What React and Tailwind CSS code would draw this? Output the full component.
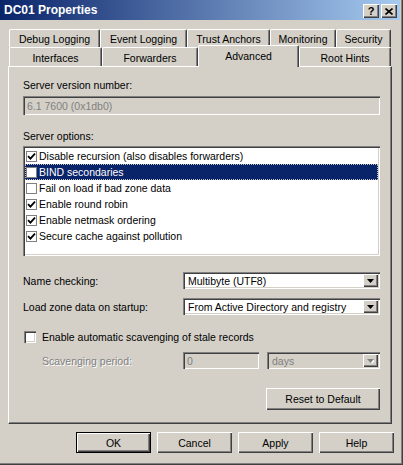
import React from "react";

const raised = "shadow-[inset_1px_1px_#ffffff,inset_-1px_-1px_#404040,inset_-2px_-2px_#808080]";
const sunken = "shadow-[inset_1px_1px_#808080,inset_2px_2px_#404040,inset_-1px_-1px_#ffffff,inset_-2px_-2px_#d4d0c8]";

function Tab({ label, w }) {
  return (
    <div
      className={`h-full flex items-center justify-center border-t border-l border-r border-t-white border-l-white border-r-[#404040] rounded-tl-[2px] rounded-tr-[2px] shadow-[inset_-1px_0_#808080] bg-[#d4d0c8] ${w}`}
    >
      <span className="leading-[12px] pt-[1px]">{label}</span>
    </div>
  );
}

function Arrow({ disabled }) {
  return (
    <div className={`w-[15px] h-[13px] bg-[#d4d0c8] ${raised} flex items-center justify-center`}>
      <svg width="7" height="4" viewBox="0 0 7 4">
        {disabled && <polygon points="1,1 8,1 4.5,5" fill="#ffffff" />}
        <polygon points="0,0 7,0 3.5,4" fill={disabled ? "#808080" : "#000000"} />
      </svg>
    </div>
  );
}

function Combo({ text, disabled, w }) {
  return (
    <div
      className={`flex h-[17px] items-center ${sunken} ${
        disabled ? "bg-[#d4d0c8] text-[#808080]" : "bg-white text-black"
      } pl-[5px] pr-[2px] ${w}`}
    >
      <span className="flex-1 truncate leading-[12px]">{text}</span>
      <Arrow disabled={disabled} />
    </div>
  );
}

function ListCheck({ checked }) {
  return (
    <div className="w-[11px] h-[11px] border border-[#808080] bg-white flex items-center justify-center shrink-0">
      {checked && (
        <svg width="9" height="9" viewBox="0 0 9 9">
          <path d="M1 4.2 L3.4 6.6 L8 1.6" stroke="#000000" strokeWidth="1.8" fill="none" />
        </svg>
      )}
    </div>
  );
}

function ListItem({ label, checked, selected }) {
  return (
    <div
      className={`flex items-center h-[16px] pl-[1px] ${
        selected ? "bg-[#0a246a] text-white outline outline-1 outline-dotted outline-[#c0c0c0] -outline-offset-1" : "text-black"
      }`}
    >
      <ListCheck checked={checked} />
      <span className="ml-[2px] leading-[12px]">{label}</span>
    </div>
  );
}

function Button({ label, def, w }) {
  return (
    <div
      className={`flex items-center justify-center bg-[#d4d0c8] ${raised} ${
        def ? "border border-black" : ""
      } ${w}`}
    >
      <span className="leading-[12px]">{label}</span>
    </div>
  );
}

export default function App() {
  return (
    <div className="w-[403px] h-[465px] bg-[#d4d0c8] overflow-hidden flex flex-col font-['Liberation_Sans',Arial,sans-serif] text-[10.5px] text-black shadow-[inset_-1px_-1px_#404040,inset_-2px_-2px_#808080]">
      {/* Title bar */}
      <div className="w-[400px] h-[20px] flex items-start bg-[linear-gradient(to_right,#0a246a,#a6caf0)] pr-[3px]">
        <span className="ml-[4px] mt-[3px] text-white font-bold text-[12px] leading-[14px]">
          DC01 Properties
        </span>
        <div className="ml-auto mt-[4px] flex gap-[2px]">
          <div className={`w-[16px] h-[14px] bg-[#d4d0c8] ${raised} flex items-center justify-center`}>
            <span className="font-bold text-[11px] leading-[11px]">?</span>
          </div>
          <div className={`w-[16px] h-[14px] bg-[#d4d0c8] ${raised} flex items-center justify-center`}>
            <svg width="8" height="7" viewBox="0 0 8 7">
              <path d="M0.5 0.5 L7.5 6.5 M7.5 0.5 L0.5 6.5" stroke="#000000" strokeWidth="1.6" />
            </svg>
          </div>
        </div>
      </div>

      {/* Tabs row 1 */}
      <div className="flex h-[18px] ml-[9px] mt-[9px]">
        <Tab label="Debug Logging" w="w-[91px]" />
        <Tab label="Event Logging" w="w-[87px]" />
        <Tab label="Trust Anchors" w="w-[83px]" />
        <Tab label="Monitoring" w="w-[66px]" />
        <Tab label="Security" w="w-[55px]" />
      </div>
      {/* Tabs row 2 */}
      <div className="flex h-[19px] ml-[9px] items-end">
        <Tab label="Interfaces" w="w-[93px]" />
        <Tab label="Forwarders" w="w-[96px]" />
        <div className="relative z-10 w-[101px] h-[22px] -mb-[1px] flex justify-center border-t border-l border-r border-t-white border-l-white border-r-[#404040] rounded-tl-[2px] rounded-tr-[2px] shadow-[inset_-1px_0_#808080] bg-[#d4d0c8]">
          <span className="leading-[12px] mt-[4px]">Advanced</span>
        </div>
        <Tab label="Root Hints" w="w-[92px]" />
      </div>

      {/* Panel */}
      <div className="ml-[8px] w-[384px] h-[358px] border-t border-l border-r border-b border-t-white border-l-white border-r-[#404040] border-b-[#404040] shadow-[inset_-1px_-1px_#808080] flex flex-col pl-[14px] pr-[11px]">
        <div className="mt-[12px] leading-[13px]">Server version number:</div>
        <div className={`mt-[4px] h-[19px] flex items-center pl-[4px] bg-[#d4d0c8] text-[#808080] ${sunken}`}>
          <span className="leading-[12px]">6.1 7600 (0x1db0)</span>
        </div>

        <div className="mt-[15px] leading-[13px]">Server options:</div>
        <div className={`mt-[3px] h-[110px] bg-white p-[2px] ${sunken}`}>
          <ListItem label="Disable recursion (also disables forwarders)" checked />
          <ListItem label="BIND secondaries" selected />
          <ListItem label="Fail on load if bad zone data" />
          <ListItem label="Enable round robin" checked />
          <ListItem label="Enable netmask ordering" checked />
          <ListItem label="Secure cache against pollution" checked />
        </div>

        <div className="mt-[16px] flex items-center h-[17px]">
          <span className="w-[160px] leading-[12px]">Name checking:</span>
          <Combo text="Multibyte (UTF8)" w="flex-1" />
        </div>
        <div className="mt-[9px] flex items-center h-[17px]">
          <span className="w-[160px] leading-[12px]">Load zone data on startup:</span>
          <Combo text="From Active Directory and registry" w="flex-1" />
        </div>

        <div className="mt-[15px] flex items-center h-[13px]">
          <div className={`w-[12px] h-[12px] bg-white ml-[1px] ${sunken}`} />
          <span className="ml-[6px] leading-[12px]">Enable automatic scavenging of stale records</span>
        </div>

        <div className="mt-[9px] flex items-center h-[17px]">
          <span className="w-[160px] pl-[19px] leading-[12px] text-[#808080] [text-shadow:1px_1px_0_#ffffff]">
            Scavenging period:
          </span>
          <div className={`w-[76px] h-[17px] flex items-center pl-[4px] bg-[#d4d0c8] text-[#808080] ${sunken}`}>
            <span className="leading-[12px]">0</span>
          </div>
          <Combo text="days" disabled w="ml-[8px] flex-1" />
        </div>

        <div className="mt-[19px] flex justify-end">
          <Button label="Reset to Default" w="w-[114px] h-[22px]" />
        </div>
      </div>

      {/* Bottom buttons */}
      <div className="mt-[8px] ml-[76px] flex gap-[6px]">
        <Button label="OK" def w="w-[75px] h-[21px]" />
        <Button label="Cancel" w="w-[75px] h-[21px]" />
        <Button label="Apply" w="w-[75px] h-[21px]" />
        <Button label="Help" w="w-[75px] h-[21px]" />
      </div>
    </div>
  );
}
